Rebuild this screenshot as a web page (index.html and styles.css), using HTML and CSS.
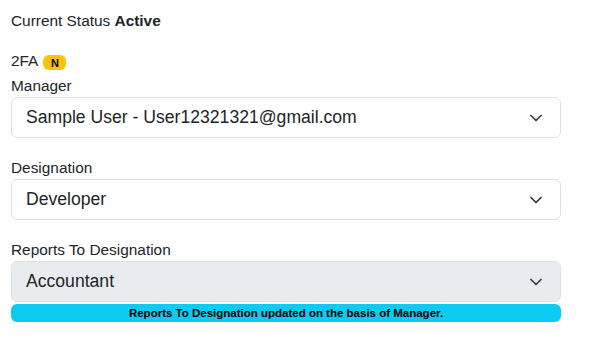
FILE: index.html
```html
<!DOCTYPE html>
<html lang="en">
<head>
  <meta charset="UTF-8">
  <title>User Settings</title>
  <link rel="stylesheet" href="styles.css">
</head>
<body>
  <div class="container">
    <p class="status">Current Status <strong>Active</strong></p>

    <div class="twofa">2FA <span class="badge">N</span></div>

    <div class="field">
      <label class="label">Manager</label>
      <div class="select">
        <span>Sample User - User12321321@gmail.com</span>
        <svg class="chevron" viewBox="0 0 12 8"><path d="M1 1.5l5 5 5-5" fill="none" stroke="#343a40" stroke-width="1.7" stroke-linecap="round" stroke-linejoin="round"/></svg>
      </div>
    </div>

    <div class="field">
      <label class="label">Designation</label>
      <div class="select">
        <span>Developer</span>
        <svg class="chevron" viewBox="0 0 12 8"><path d="M1 1.5l5 5 5-5" fill="none" stroke="#343a40" stroke-width="1.7" stroke-linecap="round" stroke-linejoin="round"/></svg>
      </div>
    </div>

    <div class="field">
      <label class="label">Reports To Designation</label>
      <div class="select disabled">
        <span>Accountant</span>
        <svg class="chevron" viewBox="0 0 12 8"><path d="M1 1.5l5 5 5-5" fill="none" stroke="#343a40" stroke-width="1.7" stroke-linecap="round" stroke-linejoin="round"/></svg>
      </div>
      <div class="note">Reports To Designation updated on the basis of Manager.</div>
    </div>
  </div>
</body>
</html>
```

FILE: styles.css
```css
* { box-sizing: border-box; }
body {
  margin: 0;
  font-family: 'Liberation Sans', Arial, sans-serif;
  color: #212529;
  background: #fff;
}
.container {
  width: 572px;
  padding: 12px 11px;
}
.status {
  margin: 0 0 22px;
  font-size: 15.4px;
  line-height: 18px;
}
.twofa {
  height: 18px;
  font-size: 15.4px;
  line-height: 18px;
  display: flex;
  align-items: center;
  gap: 5px;
  margin-bottom: 7px;
}
.badge {
  display: inline-flex;
  align-items: center;
  justify-content: center;
  width: 23px;
  height: 15px;
  margin-top: 3px;
  background: #ffc107;
  color: #000;
  font-size: 11px;
  font-weight: 700;
  border-radius: 6px;
}
.field {
  margin-bottom: 21px;
}
.label {
  display: block;
  font-size: 15.4px;
  line-height: 18px;
  margin-bottom: 2px;
}
.select {
  height: 41px;
  border: 1px solid #dee2e6;
  border-radius: 6px;
  padding: 0 18px 0 14px;
  display: flex;
  align-items: center;
  justify-content: space-between;
  font-size: 17.6px;
}
.select.disabled {
  background: #e9ecef;
}
.chevron {
  width: 12px;
  height: 8px;
}
.note {
  background: #0dcaf0;
  color: #000;
  font-size: 11.5px;
  font-weight: 700;
  text-align: center;
  border-radius: 6px;
  line-height: 18px;
  margin-top: 2px;
}
```
